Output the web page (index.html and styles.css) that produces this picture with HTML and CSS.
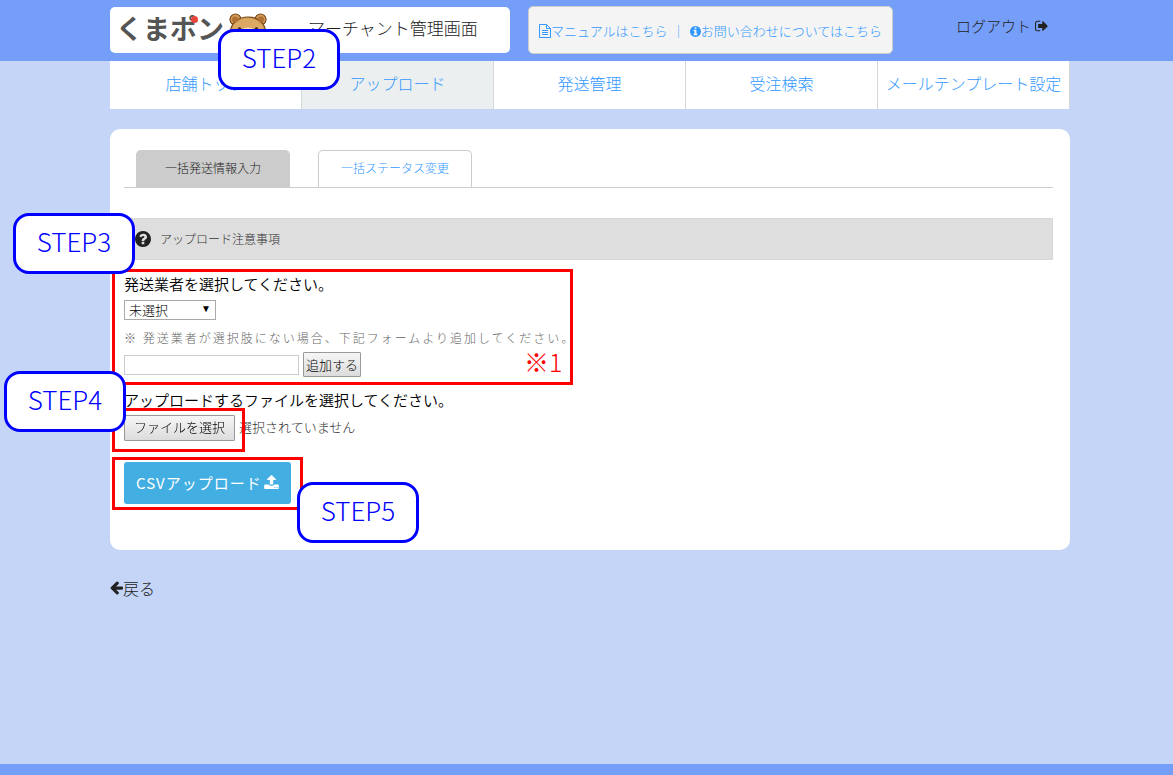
FILE: index.html
```html
<!DOCTYPE html>
<html lang="ja">
<head>
    <meta charset="UTF-8">
    <meta name="viewport" content="width=device-width, initial-scale=1.0">
    <title>アップロード | くまポン マーチャント管理画面</title>
    <link rel="stylesheet" href="styles.css">
</head>
<body>

    <!-- Header -->
    <header class="header">
        <div class="container header-inner">
            <div class="brand">
                <span class="logo">くまポン<span class="logo-dot"></span></span>
                <svg class="bear" viewBox="0 0 38 36" aria-hidden="true">
                    <g fill="#d29a52" stroke="#7a4a1e" stroke-width="1.2">
                        <circle cx="6.500" cy="6.500" r="5.500"/>
                        <circle cx="31.500" cy="6.500" r="5.500"/>
                        <path d="M1 22C1 10 9 4 19 4s18 6 18 18c0 8-8 13-18 13S1 30 1 22z"/>
                    </g>
                    <g fill="#b06f35">
                        <circle cx="6" cy="6.500" r="3"/>
                        <circle cx="32" cy="6.500" r="3"/>
                    </g>
                    <path d="M4 13C8 8 13 5.500 19 5.500S30 8 34 13l-1 10H5z" fill="#dba964"/>
                    <circle cx="10.500" cy="16" r="1.800" fill="#3b2a1a"/>
                    <circle cx="27.500" cy="16" r="1.800" fill="#3b2a1a"/>
                    <ellipse cx="19" cy="19" rx="7" ry="4.500" fill="#f3dcae"/>
                </svg>
                <span class="brand-title">マーチャント管理画面</span>
            </div>
            <div class="help-links">
                <a href="#manual"><svg class="icon-doc" viewBox="0 0 12 14" fill="none" stroke="currentColor" aria-hidden="true"><path d="M.5.5h7l4 4v9H.5zM7.500.5v4h4M3 6.500h6M3 8.500h6M3 10.500h6"/></svg>マニュアルはこちら</a>
                <span class="divider">｜</span>
                <a href="#contact"><svg class="icon-info" viewBox="128 128 1536 1536" fill="currentColor" aria-hidden="true"><path d="M1152 1376v-160q0-14-9-23t-23-9h-96v-512q0-14-9-23t-23-9h-320q-14 0-23 9t-9 23v160q0 14 9 23t23 9h96v320h-96q-14 0-23 9t-9 23v160q0 14 9 23t23 9h448q14 0 23-9t9-23zm-128-896v-160q0-14-9-23t-23-9h-192q-14 0-23 9t-9 23v160q0 14 9 23t23 9h192q14 0 23-9t9-23zm640 416q0 209-103 385.500t-279.500 279.500-385.500 103-385.500-103-279.500-279.500-103-385.500 103-385.500 279.500-279.500 385.500-103 385.500 103 279.500 279.500 103 385.500z"/></svg>お問い合わせについてはこちら</a>
            </div>
            <a class="logout" href="#logout">ログアウト<svg class="icon-logout" viewBox="64 192 1600 1400" fill="currentColor" aria-hidden="true"><path d="M704 1440q0 4 1 20t.5 26.500-3 23.500-10 19.500-20.500 6.500h-320q-119 0-203.500-84.500t-84.500-203.500v-704q0-119 84.500-203.500t203.500-84.500h320q13 0 22.500 9.500t9.500 22.500q0 4 1 20t.5 26.500-3 23.500-10 19.500-20.500 6.500h-320q-66 0-113 47t-47 113v704q0 66 47 113t113 47h312l11.500 1 11.500 3 8 5.500 7 9 2 13.500zm928-544q0 26-19 45l-544 544q-19 19-45 19t-45-19-19-45v-288h-448q-26 0-45-19t-19-45v-384q0-26 19-45t45-19h448v-288q0-26 19-45t45-19 45 19l544 544q19 19 19 45z"/></svg></a>
        </div>
    </header>

    <!-- Navigation -->
    <nav class="nav">
        <ul class="container nav-list">
            <li><a href="#top">店舗トップ</a><span class="step step-2">STEP2</span></li>
            <li class="active"><a href="#upload">アップロード</a></li>
            <li><a href="#shipping">発送管理</a></li>
            <li><a href="#orders">受注検索</a></li>
            <li><a href="#templates">メールテンプレート設定</a></li>
        </ul>
    </nav>

    <!-- Main Content -->
    <main class="main">
        <div class="container">
            <div class="panel">
                <div class="tabs">
                    <a class="tab tab-active" href="#shipping-info">一括発送情報入力</a>
                    <a class="tab" href="#status">一括ステータス変更</a>
                </div>

                <div class="notice">
                    <svg class="icon-question" viewBox="128 128 1536 1536" fill="currentColor" aria-hidden="true"><path d="M1024 1376v-192q0-14-9-23t-23-9h-192q-14 0-23 9t-9 23v192q0 14 9 23t23 9h192q14 0 23-9t9-23zm256-672q0-88-55.500-163t-138.500-116-170-41q-243 0-371 213-15 24 8 42l132 100q7 6 19 6 16 0 25-12 53-68 86-92 34-24 86-24 48 0 85.500 26t37.500 59q0 38-20 61t-68 45q-63 28-115.500 86.500t-52.500 125.500v36q0 14 9 23t23 9h192q14 0 23-9t9-23q0-19 21.500-49.500t54.500-49.500q32-18 49-28.500t46-35 44.500-48 28-60.500 12.500-81zm384 192q0 209-103 385.500t-279.500 279.500-385.500 103-385.500-103-279.500-279.500-103-385.500 103-385.500 279.500-279.500 385.500-103 385.500 103 279.500 279.500 103 385.500z"/></svg>
                    <span>アップロード注意事項</span>
                    <span class="step step-3">STEP3</span>
                </div>

                <form>
                    <div class="carrier">
                        <label class="field-label" for="carrier">発送業者を選択してください。</label>
                        <div class="select-box">
                            <select id="carrier">
                                <option>未選択</option>
                            </select>
                        </div>
                        <label class="note" for="new-carrier">※ 発送業者が選択肢にない場合、下記フォームより追加してください。</label>
                        <div class="add-row">
                            <input type="text" id="new-carrier">
                            <button type="button" class="btn-gray">追加する</button>
                        </div>
                        <span class="mark">※1</span>
                        <span class="frame frame-carrier"></span>
                    </div>

                    <div class="file-heading">
                        <span class="field-label">アップロードするファイルを選択してください。</span>
                        <span class="step step-4">STEP4</span>
                    </div>
                    <div class="file-row">
                        <div class="file-box">
                            <input type="file" id="csv-file" class="file-input">
                            <label class="btn-gray btn-file" for="csv-file">ファイルを選択</label>
                            <span class="frame frame-file"></span>
                        </div>
                        <span>選択されていません</span>
                    </div>

                    <div class="submit-box">
                        <button type="submit" class="btn-upload">CSVアップロード<svg class="icon-upload" viewBox="64 64 1664 1600" fill="currentColor" aria-hidden="true"><path d="M1344 1472q0-26-19-45t-45-19-45 19-19 45 19 45 45 19 45-19 19-45zm256 0q0-26-19-45t-45-19-45 19-19 45 19 45 45 19 45-19 19-45zm128-224v320q0 40-28 68t-68 28h-1472q-40 0-68-28t-28-68v-320q0-40 28-68t68-28h427q21 56 70.500 92t110.500 36h256q61 0 110.500-36t70.500-92h427q40 0 68 28t28 68zm-325-648q-17 40-59 40h-256v448q0 26-19 45t-45 19h-256q-26 0-45-19t-19-45v-448h-256q-42 0-59-40-17-39 14-69l448-448q18-19 45-19t45 19l448 448q31 30 14 69z"/></svg></button>
                        <span class="frame frame-submit"></span>
                        <span class="step step-5">STEP5</span>
                    </div>
                </form>
            </div>

            <a class="back" href="#back"><svg class="icon-back" viewBox="128 180 1536 1560" fill="currentColor" aria-hidden="true"><path d="M1664 896v128q0 53-32.500 90.500t-84.500 37.500h-704l293 294q38 36 38 90t-38 90l-75 76q-37 37-90 37-52 0-91-37l-651-652q-37-37-37-90 0-52 37-91l651-650q38-38 91-38 52 0 90 38l75 74q38 38 38 91t-38 91l-293 293h704q52 0 84.500 37.500t32.500 90.500z"/></svg>戻る</a>
        </div>
    </main>

    <!-- Footer -->
    <footer class="footer"></footer>

</body>
</html>
```
FILE: styles.css
```css
/* General Styles */
* {
    margin: 0;
    padding: 0;
    box-sizing: border-box;
}
body {
    display: flex;
    flex-direction: column;
    min-height: 100vh;
    background: #c5d5f7;
    color: #333;
    font-family: "Noto Sans CJK JP", sans-serif;
    font-size: 16px;
    font-weight: 300;
    line-height: 20px;
}
a {
    color: #3399ff;
    text-decoration: none;
}
button, input, select {
    font-family: inherit;
    font-weight: inherit;
}
svg {
    flex: none;
}
.container {
    max-width: 960px;
    margin: 0 auto;
}

/* Header */
.header {
    background: #759ef8;
    padding: 6px 0 7px 7px;
}
.header-inner {
    display: flex;
    align-items: center;
}
.brand {
    display: flex;
    align-items: center;
    width: 400px;
    height: 46px;
    padding: 0 0 4px 6px;
    background: #fff;
    border-radius: 5px;
}
.logo {
    position: relative;
    color: #555;
    font-size: 27px;
    font-weight: 700;
    line-height: 40px;
}
.logo-dot {
    position: absolute;
    top: 8px;
    right: 26px;
    width: 7px;
    height: 7px;
    border-radius: 50%;
    background: #e8483c;
}
.bear {
    width: 38px;
    height: 36px;
    margin: 6px 0 0 5px;
}
.brand-title {
    margin-left: 41px;
    color: #222;
    font-size: 17px;
}
.help-links {
    display: flex;
    align-items: center;
    height: 48px;
    margin-left: 18px;
    padding: 2px 10px 0;
    background: #f4f4f4;
    border: 1px solid #ccc;
    border-radius: 5px;
    font-size: 13px;
    white-space: nowrap;
}
.help-links a {
    display: flex;
    align-items: center;
}
.divider {
    width: 22px;
    text-align: center;
    color: #3399ff;
}
.icon-doc {
    width: 12px;
    height: 14px;
}
.icon-info {
    width: 11px;
    height: 11px;
}
.logout {
    display: flex;
    align-items: center;
    margin: 0 22px 8px auto;
    color: #222;
    font-size: 15px;
}
.icon-logout {
    width: 13px;
    height: 12px;
    margin-left: 4px;
}

/* Navigation */
.nav {
    padding-left: 7px;
}
.nav-list {
    display: flex;
    list-style: none;
}
.nav-list li {
    position: relative;
    flex: 1;
    background: #fff;
    border-right: 1px solid #d5d8da;
}
.nav-list .active {
    background: #ebeff0;
}
.nav-list a {
    display: block;
    padding: 12px 0 16px;
    text-align: center;
    white-space: nowrap;
}

/* Panel */
.main {
    flex: 1;
    padding: 20px 0 20px 7px;
}
.panel {
    padding: 21px 17px 46px 14px;
    background: #fff;
    border-radius: 10px;
}
.tabs {
    display: flex;
    gap: 28px;
    padding-left: 12px;
    border-bottom: 1px solid #ccc;
}
.tab {
    width: 154px;
    height: 37px;
    border: 1px solid #ccc;
    border-bottom: none;
    border-radius: 5px 5px 0 0;
    font-size: 12px;
    line-height: 34px;
    text-align: center;
}
.tab-active {
    background: #ccc;
    color: #222;
}
.notice {
    position: relative;
    display: flex;
    align-items: center;
    gap: 9px;
    height: 42px;
    margin-top: 30px;
    padding-left: 10px;
    background: #dedede;
    border: 1px solid #d8d8d8;
    font-size: 12px;
}
.icon-question {
    width: 16px;
    height: 16px;
    color: #222;
}

/* Form */
.carrier {
    position: relative;
    width: fit-content;
    margin-top: 14px;
}
.field-label {
    display: block;
    color: #000;
    font-size: 15px;
    font-weight: 350;
}
.select-box {
    position: relative;
    width: 92px;
    margin-top: 6px;
}
.select-box::after {
    content: "▼";
    position: absolute;
    top: 0;
    right: 5px;
    color: #000;
    font-family: "DejaVu Sans", sans-serif;
    font-size: 10px;
    line-height: 18px;
    pointer-events: none;
}
select {
    display: block;
    width: 100%;
    height: 20px;
    padding-left: 4px;
    background: #fff;
    border: 1px solid #a9a9a9;
    border-radius: 0;
    color: #000;
    font-size: 13px;
    line-height: 18px;
    appearance: none;
}
.note {
    display: block;
    margin-top: 8px;
    color: #666;
    font-size: 12px;
    letter-spacing: 2px;
}
.add-row {
    display: flex;
    align-items: center;
    gap: 4px;
    margin-top: 4px;
}
.add-row input {
    width: 175px;
    height: 20px;
    padding: 0 4px;
    border: 1px solid #ccc;
    font-size: 13px;
}
.btn-gray {
    height: 25px;
    padding: 0 2px;
    background: linear-gradient(#f6f6f6, #dcdcdc);
    border: 1px solid #999;
    border-radius: 1px;
    color: #000;
    font-size: 13px;
    line-height: 22px;
    cursor: pointer;
}
.file-heading {
    position: relative;
    margin-top: 13px;
}
.file-row {
    display: flex;
    gap: 4px;
    margin-top: 5px;
    font-size: 13px;
    line-height: 24px;
}
.file-box {
    position: relative;
}
.file-input {
    position: absolute;
    width: 100%;
    height: 100%;
    opacity: 0;
}
.btn-file {
    position: relative;
    display: block;
    height: 26px;
    padding: 0 9px;
}
.submit-box {
    position: relative;
    width: fit-content;
    margin-top: 21px;
}
.btn-upload {
    display: flex;
    align-items: center;
    height: 42px;
    padding: 0 12px 2px;
    background: #42aee2;
    border: none;
    border-radius: 3px;
    color: #fff;
    font-size: 15px;
    font-weight: 400;
    letter-spacing: 1px;
    cursor: pointer;
}
.icon-upload {
    width: 15px;
    height: 14px;
    margin-left: 2px;
}
.back {
    display: inline-flex;
    align-items: center;
    margin-top: 28px;
    color: #222;
}
.icon-back {
    width: 13px;
    height: 14px;
}

/* Step markers */
.step {
    position: absolute;
    z-index: 2;
    width: 122px;
    height: 61px;
    background: #fff;
    border: 3px solid #00f;
    border-radius: 16px;
    color: #00f;
    font-size: 26px;
    line-height: 49px;
    text-align: center;
}
.step-2 {
    top: -32px;
    left: 108px;
}
.step-3 {
    top: -6px;
    left: -112px;
}
.step-4 {
    top: -19px;
    left: -120px;
}
.step-5 {
    top: 20px;
    left: 173px;
}
.frame {
    position: absolute;
    z-index: 1;
    border: 3px solid #f00;
    pointer-events: none;
}
.frame-carrier {
    inset: -5px 2px -8px -12px;
}
.frame-file {
    inset: -7px -10px -11px -12px;
}
.frame-submit {
    inset: -5px -12px -6px -12px;
}
.mark {
    position: absolute;
    right: 13px;
    bottom: 2px;
    color: #f00;
    font-size: 25px;
    line-height: 28px;
}

/* Footer */
.footer {
    height: 11px;
    background: #759ef8;
}
```
